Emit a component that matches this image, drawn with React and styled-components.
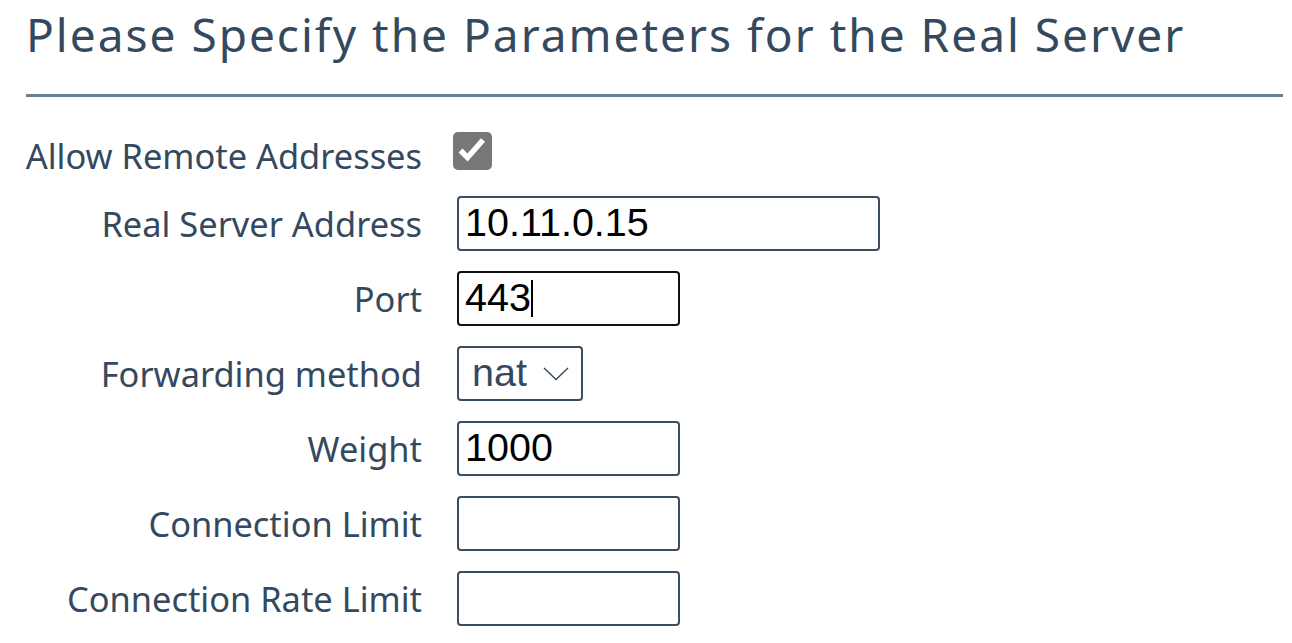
import React from "react";
import styled, { createGlobalStyle } from "styled-components";

const GlobalStyle = createGlobalStyle`
  html, body {
    margin: 0;
    padding: 0;
    background: #ffffff;
  }
  body {
    font-family: "Noto Sans", "Open Sans", sans-serif;
    color: #34495e;
  }
`;

const fields = [
  { label: "Real Server Address", value: "10.11.0.15", width: 423 },
  { label: "Port", value: "443", width: 223, focused: true },
  { label: "Forwarding method", select: ["nat", "gate", "ipip"] },
  { label: "Weight", value: "1000", width: 223 },
  { label: "Connection Limit", value: "", width: 223 },
  { label: "Connection Rate Limit", value: "", width: 223 }
];

export default function App() {
  return (
    <Page>
      <GlobalStyle />
      <Title>Please Specify the Parameters for the Real Server</Title>
      <Rule />
      <Form>
        <Label $drop={14}>Allow Remote Addresses</Label>
        <Control>
          <CheckBox role="checkbox" aria-checked="true">
            <svg width="39" height="38" viewBox="0 0 39 38">
              <path
                d="M7.5 18.5 L14.5 25.5 L30 8"
                fill="none"
                stroke="#ffffff"
                strokeWidth="5.5"
                strokeLinecap="butt"
                strokeLinejoin="miter"
              />
            </svg>
          </CheckBox>
        </Control>
        {fields.map(f => (
          <React.Fragment key={f.label}>
            <Label>{f.label}</Label>
            <Control>
              {f.select ? (
                <SelectWrap>
                  <Select defaultValue={f.select[0]}>
                    {f.select.map(o => (
                      <option key={o}>{o}</option>
                    ))}
                  </Select>
                  <Chevron width="26" height="14" viewBox="0 0 26 14">
                    <path
                      d="M1 1 L13 12.5 L25 1"
                      fill="none"
                      stroke="#34495e"
                      strokeWidth="1.4"
                    />
                  </Chevron>
                </SelectWrap>
              ) : (
                <FieldWrap>
                  <TextInput
                    type="text"
                    defaultValue={f.value}
                    $width={f.width}
                    $focused={f.focused}
                  />
                  {f.focused && <Caret />}
                </FieldWrap>
              )}
            </Control>
          </React.Fragment>
        ))}
      </Form>
    </Page>
  );
}

const Page = styled.div`
  padding: 11px 9px 0 26px;
`;

const Title = styled.h1`
  margin: 0;
  font-size: 46px;
  line-height: 46px;
  font-weight: 400;
  letter-spacing: 2px;
  color: #34495e;
  white-space: nowrap;
`;

const Rule = styled.div`
  margin-top: 37px;
  height: 2.5px;
  background: #647f96;
`;

const Form = styled.div`
  display: grid;
  grid-template-columns: 396px auto;
  grid-auto-rows: 55px;
  column-gap: 35px;
  row-gap: 20px;
  margin-top: 24px;
`;

const Label = styled.div`
  display: flex;
  align-items: center;
  justify-content: flex-end;
  padding-top: ${p => p.$drop || 0}px;
  font-size: 34.4px;
  color: #34495e;
  white-space: nowrap;
`;

const Control = styled.div`
  display: flex;
  align-items: center;
`;

const CheckBox = styled.div`
  width: 39px;
  height: 38px;
  margin: 6px 0 0 -4px;
  border-radius: 5px;
  background: #777777;
  display: flex;
  align-items: center;
  justify-content: center;
`;

const FieldWrap = styled.div`
  position: relative;
  display: flex;
`;

const TextInput = styled.input`
  box-sizing: border-box;
  width: ${p => p.$width}px;
  height: 55px;
  padding: 0 5px 2px 6px;
  border: 2px solid ${p => (p.$focused ? "#111111" : "#3b4d61")};
  border-radius: 4px;
  font-family: "Liberation Sans", Arial, sans-serif;
  font-size: 39.5px;
  color: #000000;
  background: #ffffff;
  caret-color: transparent;
  outline: none;
`;

const Caret = styled.span`
  position: absolute;
  left: 74px;
  top: 9px;
  width: 2px;
  height: 37px;
  background: #000000;
`;

const SelectWrap = styled.div`
  position: relative;
  display: flex;
`;

const Select = styled.select`
  box-sizing: border-box;
  appearance: none;
  width: 126px;
  height: 55px;
  padding: 0 0 2px 13px;
  border: 2px solid #3b4d61;
  border-radius: 4px;
  font-family: "Liberation Sans", Arial, sans-serif;
  font-size: 39.5px;
  color: #34495e;
  background: #ffffff;
  outline: none;
`;

const Chevron = styled.svg`
  position: absolute;
  left: 86px;
  top: 21px;
  pointer-events: none;
`;
